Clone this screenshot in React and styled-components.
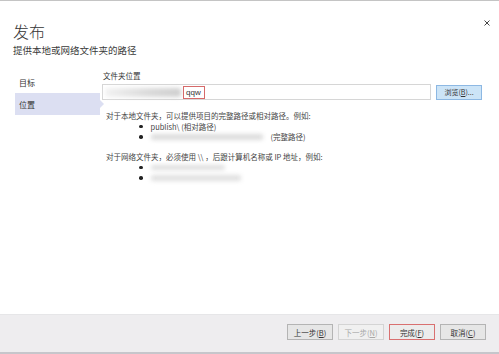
import React from "react";
import styled, { createGlobalStyle } from "styled-components";

const Global = createGlobalStyle`
  html, body { margin: 0; padding: 0; background: #fff; }
  body { width: 499px; height: 354px; overflow: hidden;
    font-family: "Noto Sans CJK SC", "Noto Sans", sans-serif; color: #333; }
`;

const Dialog = styled.div`
  width: 499px; height: 354px; box-sizing: border-box;
  border-top: 1px solid #c4c4c4; display: flex; flex-direction: column; background: #fff;
`;

const Header = styled.div`
  position: relative; padding: 20px 13px 0;
`;

const Title = styled.div`
  font-size: 16px; line-height: 20px; color: #333; font-weight: 300;
`;

const Subtitle = styled.div`
  margin-top: 3px; font-size: 9.5px; line-height: 12px; color: #3a3a3a;
`;

const Close = styled.div`
  position: absolute; top: 7px; right: 8px; width: 8px; height: 8px;
`;

const Body = styled.div`
  flex: 1; display: flex;
`;

const Sidebar = styled.div`
  width: 85px; margin-left: 15px; padding-top: 15px; display: flex; flex-direction: column;
`;

const NavItem = styled.div`
  position: relative; height: 22px; display: flex; align-items: center; padding-left: 4px;
  font-size: 8px; color: #333;
  background: ${(p) => (p.$active ? "#dcdff2" : "transparent")};
  &::after {
    content: ""; display: ${(p) => (p.$active ? "block" : "none")};
    position: absolute; right: -4px; top: 7px;
    border-left: 4px solid #dcdff2; border-top: 4px solid transparent; border-bottom: 4px solid transparent;
  }
`;

const Content = styled.div`
  margin-left: 2px; padding-top: 14px; width: 384px;
`;

const Label = styled.div`
  font-size: 7.5px; line-height: 11px; color: #333; margin-bottom: 3px; padding-left: 1px;
`;

const Row = styled.div`
  display: flex; align-items: center; gap: 5px;
`;

const PathInput = styled.div`
  width: 329px; height: 16px; box-sizing: border-box; border: 1px solid #d6d6d6;
  display: flex; align-items: center; position: relative; background: #fff;
`;

const Blur = styled.span`
  display: block; height: ${(p) => p.$h || 7}px; width: ${(p) => p.$w}px;
  background: ${(p) => p.$bg || "#d8d8d8"}; filter: blur(2px); border-radius: 2px;
  margin-left: ${(p) => p.$ml || 0}px;
`;

const Marked = styled.span`
  position: absolute; left: 80px; top: 1px; width: 22px; height: 13px; box-sizing: border-box;
  border: 1px solid #d66a6a; font-size: 8px; line-height: 11px; padding-left: 2px; color: #333;
  font-family: "Liberation Sans", sans-serif; background: #fff;
`;

const BrowseButton = styled.div`
  width: 46px; height: 15px; box-sizing: border-box; border: 1px solid #8db8e3; background: #cce4f7;
  font-size: 7px; display: flex; align-items: center; justify-content: center; color: #333;
`;

const Help = styled.div`
  padding-left: 4px; font-size: 7.5px; color: #444;
`;

const HelpLine = styled.div`
  line-height: 10px; margin-top: ${(p) => p.$mt || 0}px;
`;

const Bullets = styled.div`
  padding-left: 33px; display: flex; flex-direction: column;
`;

const Bullet = styled.div`
  display: flex; align-items: center; height: 10.5px; gap: 8px;
  &::before { content: ""; width: 3.5px; height: 3.5px; border-radius: 50%; background: #222; flex: none; }
`;

const Footer = styled.div`
  height: 40px; box-sizing: border-box; background: #eeedef; border-top: 1px solid #e6e6e8;
  border-bottom: 2px solid #c6c6cb; display: flex; justify-content: flex-end; align-items: flex-start;
  padding: 9px 13px 0 0; gap: 5px;
`;

const Button = styled.div`
  width: 46px; height: 16px; box-sizing: border-box; display: flex; align-items: center; justify-content: center;
  font-size: 7.5px;
  border: 1px solid ${(p) => (p.$marked ? "#d97070" : p.$disabled ? "#d4d4d4" : "#b4b4b4")};
  background: ${(p) => (p.$disabled ? "#f0f0f0" : p.$marked ? "#ececec" : "#e6e6e6")};
  color: ${(p) => (p.$disabled ? "#a8a8a8" : "#333")};
`;

export default function App() {
  return (
    <>
      <Global />
      <Dialog>
        <Header>
          <Title>发布</Title>
          <Subtitle>提供本地或网络文件夹的路径</Subtitle>
          <Close>
            <svg width="8" height="8" viewBox="0 0 8 8">
              <path d="M1.5 1.5 L6.5 6.5 M6.5 1.5 L1.5 6.5" stroke="#444" strokeWidth="1" />
            </svg>
          </Close>
        </Header>
        <Body>
          <Sidebar>
            <NavItem>目标</NavItem>
            <NavItem $active>位置</NavItem>
          </Sidebar>
          <Content>
            <Label>文件夹位置</Label>
            <Row>
              <PathInput>
                <Blur $w={76} $h={9} $ml={2} $bg="linear-gradient(90deg,#f2f2f2,#d9d9d9 60%,#cfcfcf)" />
                <Marked>qqw</Marked>
              </PathInput>
              <BrowseButton>浏览(<u>B</u>)...</BrowseButton>
            </Row>
            <Help>
              <HelpLine $mt={11}>对于本地文件夹，可以提供项目的完整路径或相对路径。例如:</HelpLine>
              <Bullets>
                <Bullet>publish\ (相对路径)</Bullet>
                <Bullet>
                  <Blur $w={112} $h={6} $bg="#dcdcdc" />
                  <span>(完整路径)</span>
                </Bullet>
              </Bullets>
              <HelpLine $mt={10}>对于网络文件夹，必须使用 \\ ，后跟计算机名称或 IP 地址，例如:</HelpLine>
              <Bullets>
                <Bullet><Blur $w={74} $h={5} $bg="#dedede" /></Bullet>
                <Bullet><Blur $w={90} $h={6} $bg="#e0e0e0" /></Bullet>
              </Bullets>
            </Help>
          </Content>
        </Body>
        <Footer>
          <Button>上一步(<u>B</u>)</Button>
          <Button $disabled>下一步(<u>N</u>)</Button>
          <Button $marked>完成(<u>F</u>)</Button>
          <Button>取消(<u>C</u>)</Button>
        </Footer>
      </Dialog>
    </>
  );
}
